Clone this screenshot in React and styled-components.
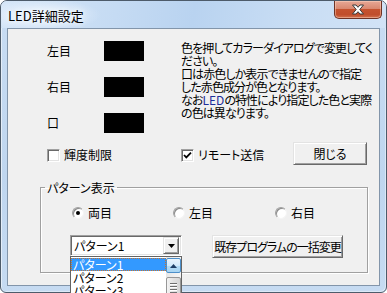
import React from 'react';
import styled, { createGlobalStyle } from 'styled-components';

const Global = createGlobalStyle`
  html, body { margin: 0; padding: 0; background: #ffffff; }
  body {
    width: 387px; height: 293px; overflow: hidden;
    font-family: "Noto Sans CJK JP", "Liberation Sans", sans-serif;
    font-size: 12px; color: #000;
    font-feature-settings: "palt";
  }
  * { box-sizing: border-box; }
`;

const Window = styled.div`
  width: 387px;
  height: 293px;
  border: 1px solid #4d5b6a;
  border-radius: 7px 7px 6px 6px;
  background: linear-gradient(180deg, #c9ddf3 0%, #bfd6ef 60%, #c6dbf2 100%);
  display: flex;
  flex-direction: column;
  box-shadow: inset 1px 1px 0 #e4eef9, inset -1px -1px 0 #dbe8f6;
`;

const TitleBar = styled.div`
  height: 27px;
  flex: none;
  display: flex;
  justify-content: space-between;
  align-items: flex-start;
  padding-left: 7px;
  padding-right: 4px;
  border-radius: 6px 6px 0 0;
  background:
    radial-gradient(ellipse 60px 16px at 40px 14px, rgba(240, 247, 255, 0.95), rgba(240, 247, 255, 0) 100%),
    linear-gradient(100deg, #d4e5f7 0%, #c5dbf3 30%, #b9d3f0 50%, #c8ddf4 75%, #d2e3f6 100%);
`;

const Title = styled.div`
  padding-top: 7px;
  font-size: 13px;
  line-height: 15px;
  color: #000;
  text-shadow: 0 0 4px #f4f9ff, 0 0 8px #f4f9ff;
`;

const CloseButton = styled.div`
  width: 48px;
  height: 18px;
  border: 1px solid #6e3326;
  border-top: none;
  border-radius: 0 0 5px 5px;
  background: linear-gradient(180deg, #e7a896 0%, #d98870 45%, #c5522f 50%, #c04e2c 80%, #d2714f 100%);
  box-shadow: inset 0 0 0 1px rgba(255, 220, 200, 0.45);
  display: flex;
  align-items: center;
  justify-content: center;
`;

const FrameBody = styled.div`
  flex: 1;
  display: flex;
  padding: 0 6px 6px 6px;
`;

const Client = styled.div`
  flex: 1;
  border: 1px solid #8295aa;
  background: #f0f0f0;
  display: flex;
  flex-direction: column;
`;

const TopSection = styled.div`
  display: flex;
  padding: 12px 0 0 39px;
`;

const SwatchGrid = styled.div`
  display: grid;
  grid-template-columns: 57px 40px;
  grid-auto-rows: 20px;
  row-gap: 16px;
  align-items: center;
`;

const Label = styled.span`
  line-height: 14px;
  white-space: nowrap;
`;

const Swatch = styled.div`
  width: 40px;
  height: 20px;
  background: ${p => p.$color};
`;

const Note = styled.div`
  margin-left: 37px;
  margin-top: 0;
  line-height: 13px;
  white-space: nowrap;
  letter-spacing: -0.9px;
`;

const Latin = styled.span`
  color: #1d2f9a;
  letter-spacing: 0;
`;

const OptionRow = styled.div`
  display: grid;
  grid-template-columns: 134px 112px 74px;
  align-items: center;
  height: 23px;
  margin-top: 9px;
  padding-left: 39px;
`;

const CheckItem = styled.label`
  display: flex;
  align-items: center;
  gap: 4px;
  margin-top: 3px;
  line-height: 14px;
  white-space: nowrap;
`;

const CheckBox = styled.span`
  width: 13px;
  height: 13px;
  flex: none;
  background: #fff;
  border: 1px solid;
  border-color: #a0a0a0 #ffffff #ffffff #a0a0a0;
  box-shadow: inset 1px 1px 0 #696969, inset -1px -1px 0 #e3e3e3;
  display: flex;
  align-items: center;
  justify-content: center;
`;

const Button = styled.div`
  width: ${p => p.$w}px;
  height: 23px;
  background: #f0f0f0;
  border: 1px solid;
  border-color: #e3e3e3 #696969 #696969 #e3e3e3;
  box-shadow: inset 1px 1px 0 #ffffff, inset -1px -1px 0 #a0a0a0;
  display: flex;
  align-items: center;
  justify-content: center;
  line-height: 14px;
  white-space: nowrap;
  letter-spacing: ${p => p.$ls || 0}px;
`;

const Group = styled.fieldset`
  margin: 16px 0 0 32px;
  width: 328px;
  height: 92px;
  padding: 0;
  border: 1px solid #a0a0a0;
  box-shadow: 1px 1px 0 #ffffff, inset 1px 1px 0 #ffffff;
  min-width: 0;
`;

const Legend = styled.legend`
  margin-left: 4px;
  padding: 0 2px;
  line-height: 13px;
`;

const RadioRow = styled.div`
  display: grid;
  grid-template-columns: 101px 102px 80px;
  margin-top: 12px;
  padding-left: 31px;
`;

const RadioItem = styled.label`
  display: flex;
  align-items: center;
  gap: 4px;
  height: 13px;
  line-height: 14px;
`;

const Radio = styled.span`
  width: 12px;
  height: 12px;
  flex: none;
  border-radius: 50%;
  background: #fff;
  border: 1px solid;
  border-color: #a0a0a0 #f4f4f4 #f4f4f4 #a0a0a0;
  box-shadow: inset 1px 1px 0 #8a8a8a;
  display: flex;
  align-items: center;
  justify-content: center;
  &::after {
    content: "";
    width: 4px;
    height: 4px;
    border-radius: 50%;
    background: ${p => (p.$on ? '#000' : 'transparent')};
  }
`;

const ComboRow = styled.div`
  display: flex;
  align-items: flex-start;
  gap: 30px;
  margin-top: 16px;
  padding-left: 29px;
`;

const Combo = styled.div`
  position: relative;
  width: 112px;
  height: 21px;
  background: #fff;
  border: 1px solid;
  border-color: #a0a0a0 #ffffff #ffffff #a0a0a0;
  box-shadow: inset 1px 1px 0 #696969, inset -1px -1px 0 #e3e3e3;
  display: flex;
  align-items: center;
  justify-content: space-between;
  padding: 2px 2px 2px 3px;
`;

const ComboText = styled.span`
  line-height: 14px;
  white-space: nowrap;
`;

const DropButton = styled.div`
  width: 16px;
  height: 17px;
  background: #f0f0f0;
  border: 1px solid;
  border-color: #e3e3e3 #696969 #696969 #e3e3e3;
  box-shadow: inset 1px 1px 0 #ffffff, inset -1px -1px 0 #a0a0a0;
  display: flex;
  align-items: center;
  justify-content: center;
`;

const DropList = styled.div`
  position: absolute;
  left: -1px;
  top: 20px;
  width: 112px;
  height: 60px;
  background: #fff;
  border: 1px solid #646464;
  display: flex;
  z-index: 5;
`;

const Items = styled.div`
  flex: 1;
  padding-top: 1px;
`;

const Item = styled.div`
  height: 13px;
  line-height: 13px;
  padding-left: 2px;
  white-space: nowrap;
  color: ${p => (p.$sel ? '#fff' : '#000')};
  background: ${p => (p.$sel ? '#3399ff' : 'transparent')};
  outline: ${p => (p.$sel ? '1px dotted #c8742e' : 'none')};
  outline-offset: -1px;
`;

const ScrollBar = styled.div`
  width: 15px;
  flex: none;
  background: linear-gradient(90deg, #e6e6e6, #f6f6f6);
  display: flex;
  flex-direction: column;
  align-items: center;
  gap: 4px;
  padding-top: 1px;
`;

const ScrollUp = styled.div`
  width: 15px;
  height: 15px;
  border: 1px solid #4d8fc9;
  border-radius: 2px;
  background: linear-gradient(180deg, #eaf5fd 0%, #d3ebfb 50%, #b3dcf6 51%, #a8d5f3 100%);
  display: flex;
  align-items: center;
  justify-content: center;
`;

const Thumb = styled.div`
  width: 15px;
  height: 30px;
  border: 1px solid #979797;
  border-radius: 2px;
  background: linear-gradient(90deg, #f3f3f3, #e2e2e2 50%, #d6d6d6);
  display: flex;
  flex-direction: column;
  align-items: center;
  padding-top: 5px;
  gap: 1px;
`;

const Grip = styled.div`
  width: 7px;
  height: 1px;
  background: #6f6f6f;
  box-shadow: 0 1px 0 #fff;
  margin-bottom: 1px;
`;

const CloseX = () => (
  <svg width="14" height="11" viewBox="0 0 14 11">
    <path
      d="M1.5 1 H5 L7 3.3 L9 1 H12.5 L8.8 5.5 L12.5 10 H9 L7 7.7 L5 10 H1.5 L5.2 5.5 Z"
      fill="#ffffff"
      stroke="#3a3a3a"
      strokeWidth="1"
      strokeLinejoin="round"
    />
  </svg>
);

const Check = () => (
  <svg width="9" height="9" viewBox="0 0 9 9">
    <path d="M1 4 L3.3 6.4 L8 1.6" fill="none" stroke="#000" strokeWidth="1.8" />
  </svg>
);

const DownArrow = () => (
  <svg width="7" height="4" viewBox="0 0 7 4">
    <path d="M0 0 H7 L3.5 4 Z" fill="#000" />
  </svg>
);

const UpArrow = () => (
  <svg width="7" height="4" viewBox="0 0 7 4">
    <path d="M0 4 H7 L3.5 0 Z" fill="#1f3f66" />
  </svg>
);

const swatches = [
  { label: '左目', color: '#000' },
  { label: '右目', color: '#000' },
  { label: '口', color: '#000' },
];

export default function App() {
  return (
    <>
      <Global />
      <Window>
        <TitleBar>
          <Title>LED詳細設定</Title>
          <CloseButton><CloseX /></CloseButton>
        </TitleBar>
        <FrameBody>
          <Client>
            <TopSection>
              <SwatchGrid>
                {swatches.map(s => (
                  <React.Fragment key={s.label}>
                    <Label>{s.label}</Label>
                    <Swatch $color={s.color} />
                  </React.Fragment>
                ))}
              </SwatchGrid>
              <Note>
                色を押してカラーダイアログで変更してく<br />
                ださい。<br />
                口は赤色しか表示できませんので指定<br />
                した赤色成分が色となります。<br />
                なお<Latin>LED</Latin>の特性により指定した色と実際<br />
                の色は異なります。
              </Note>
            </TopSection>
            <OptionRow>
              <CheckItem><CheckBox />輝度制限</CheckItem>
              <CheckItem><CheckBox><Check /></CheckBox>リモート送信</CheckItem>
              <Button $w={74}>閉じる</Button>
            </OptionRow>
            <Group>
              <Legend>パターン表示</Legend>
              <RadioRow>
                <RadioItem><Radio $on />両目</RadioItem>
                <RadioItem><Radio />左目</RadioItem>
                <RadioItem><Radio />右目</RadioItem>
              </RadioRow>
              <ComboRow>
                <Combo>
                  <ComboText>パターン1</ComboText>
                  <DropButton><DownArrow /></DropButton>
                  <DropList>
                    <Items>
                      <Item $sel>パターン1</Item>
                      <Item>パターン2</Item>
                      <Item>パターン3</Item>
                    </Items>
                    <ScrollBar>
                      <ScrollUp><UpArrow /></ScrollUp>
                      <Thumb><Grip /><Grip /><Grip /><Grip /></Thumb>
                    </ScrollBar>
                  </DropList>
                </Combo>
                <Button $w={131} $ls={-1}>既存プログラムの一括変更</Button>
              </ComboRow>
            </Group>
          </Client>
        </FrameBody>
      </Window>
    </>
  );
}
